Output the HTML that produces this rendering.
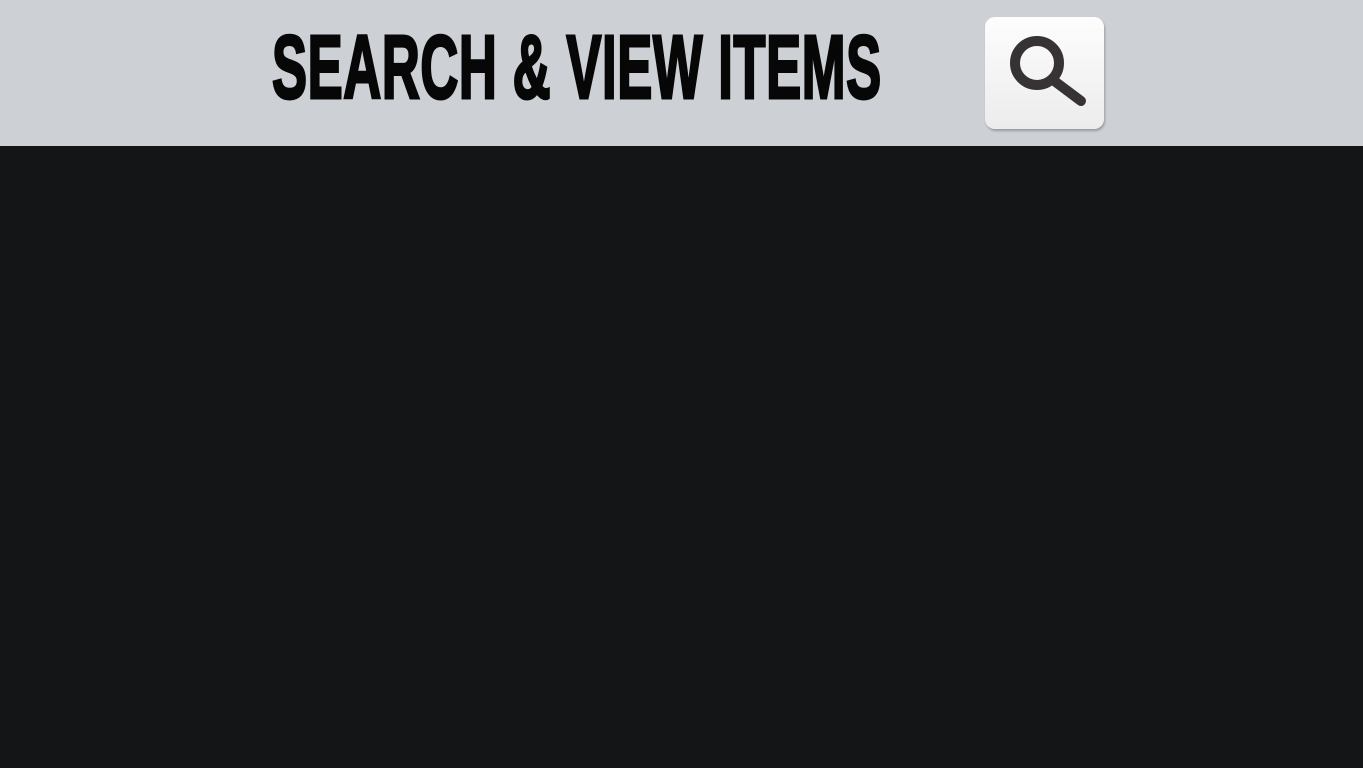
<!DOCTYPE html>
<html><head><style>
html,body{margin:0;padding:0;width:1363px;height:768px;background:#141517;overflow:hidden}
.hdr{position:absolute;left:0;top:0;width:1363px;height:146px;background:#cdd0d5}
.t{position:absolute;left:272px;top:23px;font-family:"Liberation Sans",sans-serif;font-weight:bold;font-size:90px;line-height:90px;color:#070707;white-space:nowrap;transform-origin:0 0;transform:scaleX(0.584);-webkit-text-stroke:3px #070707;letter-spacing:1px}
.btn{position:absolute;left:985px;top:17px;width:119px;height:112px;border-radius:10px;background:linear-gradient(#fdfdfd,#ececec);box-shadow:1px 2px 2px rgba(0,0,0,0.25)}
.btn svg{display:block;position:absolute;left:0;top:0}
</style></head><body>
<div class="hdr">
<div class="t">SEARCH &amp; VIEW ITEMS</div>
<div class="btn"><svg width="119" height="112" viewBox="0 0 119 112">
<circle cx="52" cy="46" r="22" fill="none" stroke="#373234" stroke-width="10"/>
<line x1="68" y1="63" x2="96" y2="84" stroke="#373234" stroke-width="10" stroke-linecap="round"/>
</svg></div>
</div>
</body></html>
